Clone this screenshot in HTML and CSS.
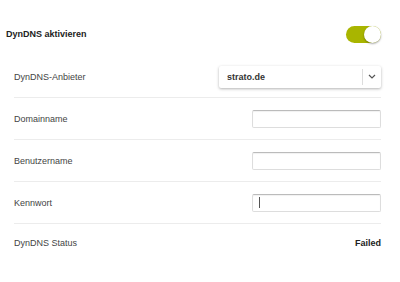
FILE: index.html
```html
<!DOCTYPE html>
<html>
<head>
<meta charset="utf-8">
<link rel="stylesheet" href="styles.css">
</head>
<body>
<div class="panel">
  <div class="header">
    <span class="title">DynDNS aktivieren</span>
    <span class="toggle"><span class="knob"></span></span>
  </div>
  <div class="rows">
    <div class="row">
      <span class="label">DynDNS-Anbieter</span>
      <div class="select">
        <span class="select-value">strato.de</span>
        <span class="select-arrow">
          <svg width="8" height="5" viewBox="0 0 8 5"><path d="M1 1 L4 4 L7 1" fill="none" stroke="#555" stroke-width="1.2"/></svg>
        </span>
      </div>
    </div>
    <div class="row">
      <span class="label">Domainname</span>
      <input class="field" type="text">
    </div>
    <div class="row">
      <span class="label">Benutzername</span>
      <input class="field" type="text">
    </div>
    <div class="row">
      <span class="label">Kennwort</span>
      <div class="field fake"><span class="caret"></span></div>
    </div>
    <div class="row last">
      <span class="label">DynDNS Status</span>
      <span class="status">Failed</span>
    </div>
  </div>
</div>
</body>
</html>
```

FILE: styles.css
```css
* { box-sizing: border-box; }
body {
  margin: 0;
  background: #fff;
  font-family: "Liberation Sans", Arial, sans-serif;
  font-size: 9px;
  color: #333;
}
.panel {
  width: 381px;
  padding: 16px 0 0 6px;
}
.header {
  display: flex;
  align-items: center;
  justify-content: space-between;
  height: 36px;
}
.title {
  font-weight: bold;
  color: #222;
}
.toggle {
  position: relative;
  width: 35px;
  height: 17px;
  border-radius: 9px;
  background: #a9b500;
  display: flex;
  justify-content: flex-end;
}
.knob {
  width: 17px;
  height: 17px;
  border-radius: 50%;
  background: #fff;
  box-shadow: 0 1px 2px rgba(0,0,0,0.35);
}
.rows {
  margin-left: 8px;
  margin-top: 4px;
}
.row {
  display: flex;
  align-items: center;
  justify-content: space-between;
  height: 42px;
  border-bottom: 1px solid #ececec;
  color: #444;
}
.row.last {
  border-bottom: none;
  height: 38px;
}
.select {
  width: 162px;
  height: 22px;
  display: flex;
  align-items: center;
  background: #fff;
  border-radius: 2px;
  box-shadow: 0 1px 3px rgba(0,0,0,0.3);
}
.select-value {
  flex: 1;
  padding-left: 8px;
  font-weight: bold;
  color: #333;
}
.select-arrow {
  width: 19px;
  height: 16px;
  border-left: 1px solid #ddd;
  display: flex;
  align-items: center;
  justify-content: center;
}
.field {
  width: 129px;
  height: 18px;
  border: 1px solid #ddd;
  border-top-color: #bbb;
  border-radius: 2px;
  background: #fff;
  margin: 0;
  padding: 0;
  box-shadow: inset 0 1px 1px rgba(0,0,0,0.06);
}
.fake {
  display: flex;
  align-items: center;
  padding-left: 6px;
}
.caret {
  width: 1px;
  height: 11px;
  background: #555;
}
.status {
  font-weight: bold;
  color: #222;
}
```
